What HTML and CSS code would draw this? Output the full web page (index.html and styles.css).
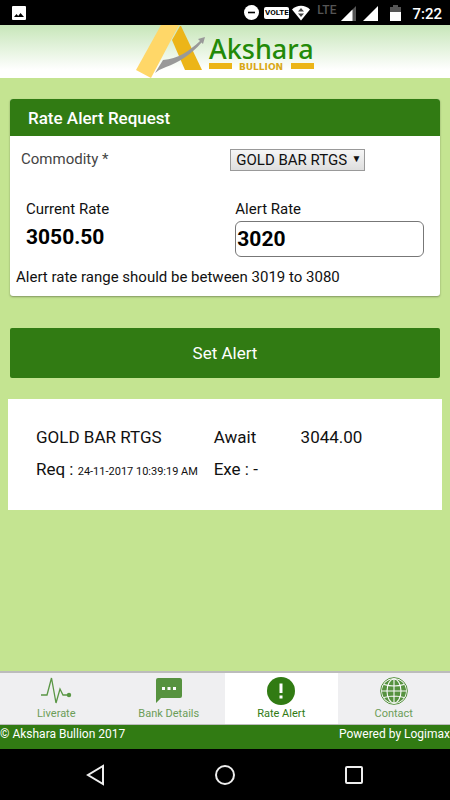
FILE: index.html
```html
<!DOCTYPE html>
<html lang="en">
<head>
<meta charset="utf-8">
<meta name="viewport" content="width=device-width, initial-scale=1">
<title>Akshara Bullion</title>
<link rel="stylesheet" href="styles.css">
</head>
<body>
<div class="status">
  <svg class="status-photo" width="14" height="14" viewBox="0 0 14 14"><rect width="14" height="14" rx="1" fill="#fff"/><path d="M2 11L4.500 8l1.700 2L8.500 7l3.500 4z" fill="#000"/></svg>
  <svg width="15" height="15" viewBox="0 0 15 15"><circle cx="7.500" cy="7.500" r="7.500" fill="#fff"/><path d="M4 7.500h7" stroke="#000" stroke-width="1.600"/></svg>
  <span class="volte">VOLTE</span>
  <svg class="wifi" width="18" height="16" viewBox="0 0 18 16"><path d="M0 4.500C5-.5 13-.5 18 4.500L9 15.500z" fill="#fff"/><path d="M6 6.500L9 3l3 3.500zM6 8.500h6L9 12z" fill="#444"/></svg>
  <span class="lte">LTE</span>
  <svg class="signal" width="15" height="15" viewBox="0 0 15 15"><path d="M0 15L15 0v15z" fill="#555"/><path d="M0 15L11.500 3.500V15z" fill="#fff"/></svg>
  <svg class="signal-full" width="15" height="15" viewBox="0 0 15 15"><path d="M0 15L15 0v15z" fill="#fff"/></svg>
  <svg class="battery" width="11" height="16" viewBox="0 0 11 16"><path d="M0 2h3V0h5v2h3v5H0z" fill="#555"/><path d="M0 7h11v9H0z" fill="#fff"/></svg>
  <time>7:22</time>
</div>

<header class="header">
  <svg class="logo" width="180" height="53" viewBox="0 0 180 53" role="img" aria-label="Akshara Bullion">
    <path d="M45 1L37 15L50 45H67L46 1z" fill="#ecb518"/>
    <path d="M26 0H44L16 53L1 45z" fill="#ffd768"/>
    <path d="M20 48L28 35C43 34 54 26 65 16L63 14L70 12L68 19L66.500 17.500C57 29 43 38 31 42Q25 44 20 48z" fill="#999"/>
    <text class="logo-name" x="74" y="34">Akshara</text>
    <path d="M74 38h23v6H74zM156 38h23v6h-23z" fill="#ecb518"/>
    <text class="logo-sub" x="126" y="45" text-anchor="middle">BULLION</text>
  </svg>
</header>

<main class="main">
  <form class="request" id="request">
    <h1>Rate Alert Request</h1>
    <div class="row">
      <label class="commodity" for="commodity">Commodity *</label>
      <div class="pick"><select id="commodity"><option>GOLD BAR RTGS</option></select></div>
    </div>
    <div class="row rates">
      <div class="current">
        <span>Current Rate</span>
        <strong>3050.50</strong>
      </div>
      <div class="alert">
        <label for="rate">Alert Rate</label>
        <input id="rate" type="text" inputmode="decimal" value="3020">
      </div>
    </div>
    <p class="hint">Alert rate range should be between 3019 to 3080</p>
  </form>
  <button class="submit" type="submit" form="request">Set Alert</button>
  <section class="result">
    <span>GOLD BAR RTGS</span><span>Await</span><span>3044.00</span>
    <span>Req : <small>24-11-2017 10:39:19 AM</small></span><span>Exe : -</span>
  </section>
</main>

<nav class="tabs">
  <a href="#liverate">
    <svg width="32" height="28" viewBox="0 0 32 28"><path d="M1 18H7L11.500 1L16 26L20 12L23 18H28" fill="none" stroke="#34801a" stroke-width="1.300"/><circle cx="29" cy="18" r="2.200" fill="#34801a"/></svg>
    Liverate
  </a>
  <a href="#bank">
    <svg width="28" height="28" viewBox="0 0 28 28"><path d="M3 1H25Q27 1 27 3V19Q27 21 25 21H6L1 26V3Q1 1 3 1z" fill="#317b13"/><path d="M7 10h3v3H7zM12.500 10h3v3h-3zM18 10h3v3h-3z" fill="#fff"/></svg>
    Bank Details
  </a>
  <a href="#alert" class="active" aria-current="page">
    <svg width="28" height="28" viewBox="0 0 28 28"><circle cx="14" cy="14" r="14" fill="#317b13"/><path d="M12.500 6.500h3v9.500h-3zM12.500 18.500h3v3h-3z" fill="#fff"/></svg>
    Rate Alert
  </a>
  <a href="#contact">
    <svg width="28" height="28" viewBox="0 0 28 28"><circle cx="14" cy="14" r="13.400" fill="#fff" stroke="#317b13"/><circle cx="14" cy="14" r="12" fill="#317b13"/><g fill="none" stroke="#fff" stroke-width="1.100"><path d="M14 2V26M2 14H26M4 7.500Q14 10.500 24 7.500M4 20.500Q14 17.500 24 20.500"/><ellipse cx="14" cy="14" rx="7" ry="12"/></g></svg>
    Contact
  </a>
</nav>

<footer class="footer"><span>© Akshara Bullion 2017</span><span>Powered by Logimax</span></footer>

<div class="system">
  <button type="button" aria-label="Back"><svg width="20" height="22" viewBox="0 0 20 22"><path d="M17 2V20L2 11z"/></svg></button>
  <button type="button" aria-label="Home"><svg width="22" height="22" viewBox="0 0 22 22"><circle cx="11" cy="11" r="9"/></svg></button>
  <button type="button" aria-label="Recent apps"><svg width="20" height="20" viewBox="0 0 20 20"><rect x="2" y="2" width="16" height="16" rx="1"/></svg></button>
</div>
</body>
</html>
```
FILE: styles.css
```css
* {
  box-sizing: border-box;
}

body {
  margin: 0;
  min-height: 100vh;
  display: flex;
  flex-direction: column;
  background: #c4e491;
  color: #111;
  font-family: Roboto, "Liberation Sans", sans-serif;
  font-size: 15px;
  line-height: 20px;
}

button, input, select {
  font: inherit;
  color: inherit;
}

/* Device status bar */
.status {
  height: 25px;
  padding: 0 8px 0 12px;
  display: flex;
  align-items: center;
  background: #000;
  color: #fff;
}

.status-photo {
  margin-right: auto;
}

.volte {
  width: 25px;
  margin: 0 3px 0 5px;
  border-radius: 2px;
  background: #fff;
  color: #000;
  font-size: 8px;
  font-weight: 700;
  line-height: 12px;
  text-align: center;
}

.lte {
  margin: 0 5px 0 7px;
  color: #555;
  font-size: 12px;
  font-weight: 500;
  line-height: 12px;
  padding-bottom: 6px;
}

.signal,
.signal-full {
  margin-top: 2px;
}

.battery {
  margin: 0 11px 0 12px;
}

.signal-full {
  margin-left: 7px;
}

.status time {
  font-size: 15px;
  font-weight: 500;
  padding-top: 2px;
}

/* Brand header */
.header {
  display: flex;
  justify-content: center;
  background: linear-gradient(#c7e6b9, #fff 85%);
}

.logo {
  display: block;
}

.logo-name {
  font-family: "Noto Sans", sans-serif;
  font-size: 27px;
  font-weight: 500;
  fill: #238a08;
}

.logo-sub {
  font-family: "DejaVu Sans", sans-serif;
  font-size: 9px;
  font-weight: 700;
  fill: #d9a818;
}

/* Content */
.main {
  flex: 1;
  display: flex;
  flex-direction: column;
  padding: 21px 10px;
}

.request {
  margin: 0 0 32px;
  border-radius: 3px;
  background: #fff;
  box-shadow: 0 1px 2px rgba(0, 0, 0, 0.35);
  overflow: hidden;
}

.request h1 {
  margin: 0;
  padding: 9px 18px 8px;
  background: #317b13;
  color: #fff;
  font-size: 17px;
  font-weight: 500;
  line-height: 20px;
}

.row {
  display: grid;
  grid-template-columns: 51% 49%;
  padding-top: 13px;
}

.commodity {
  padding-left: 11px;
  color: #444;
}

.pick {
  position: relative;
  justify-self: start;
  padding-left: 1px;
}

.pick::after {
  content: "▼";
  position: absolute;
  right: 4px;
  top: 0;
  font-size: 10px;
  pointer-events: none;
}

.pick select {
  display: block;
  height: 22px;
  padding: 0 17px 3px 5px;
  appearance: none;
  border: 1px solid #999;
  border-radius: 0;
  background: linear-gradient(#f6f6f6, #dedede);
}

.rates {
  padding-top: 28px;
}

.current,
.alert {
  display: flex;
  flex-direction: column;
  padding: 0 16px;
}

.alert {
  padding-left: 6px;
}

.current strong {
  padding-top: 6px;
  font-size: 21px;
  line-height: 24px;
  color: #000;
}

.alert input {
  width: 100%;
  height: 36px;
  margin-top: 2px;
  padding: 0 1px;
  border: 1px solid #777;
  border-radius: 6px;
  background: #fff;
  color: #000;
  font-size: 21px;
  font-weight: 700;
}

.hint {
  margin: 0;
  padding: 10px 6px 9px;
}

.submit {
  height: 50px;
  border: 0;
  border-radius: 2px;
  background: #317b13;
  color: #fff;
  font-size: 17px;
}

.result {
  margin: 21px -2px 0;
  padding: 22px 28px 25px;
  display: grid;
  grid-template-columns: 47% 23% 30%;
  background: #fff;
  font-size: 17px;
  line-height: 32px;
}

.result span {
  height: 32px;
}

.result small {
  font-size: 11px;
}

/* Bottom tabs */
.tabs {
  display: grid;
  grid-template-columns: repeat(4, 1fr);
  border-top: 2px solid #bcbcbc;
  border-bottom: 1px solid #bcbcbc;
  background: #efeff1;
}

.tabs a {
  height: 51px;
  padding-top: 4px;
  display: flex;
  flex-direction: column;
  align-items: center;
  color: #6c9d58;
  font-size: 11px;
  line-height: 18px;
  text-decoration: none;
}

.tabs svg {
  opacity: 0.8;
}

.tabs .active {
  background: #fff;
  color: #317b13;
}

.tabs .active svg {
  opacity: 1;
}

.footer {
  height: 24px;
  display: flex;
  justify-content: space-between;
  background: #317b13;
  color: #fff;
  font-size: 12px;
  line-height: 19px;
}

/* Device navigation bar */
.system {
  height: 51px;
  padding: 0 32px;
  display: grid;
  grid-template-columns: repeat(3, 1fr);
  place-items: center;
  background: #000;
}

.system button {
  display: flex;
  padding: 8px;
  border: 0;
  background: none;
}

.system svg {
  fill: none;
  stroke: #eee;
  stroke-width: 2;
}
```
